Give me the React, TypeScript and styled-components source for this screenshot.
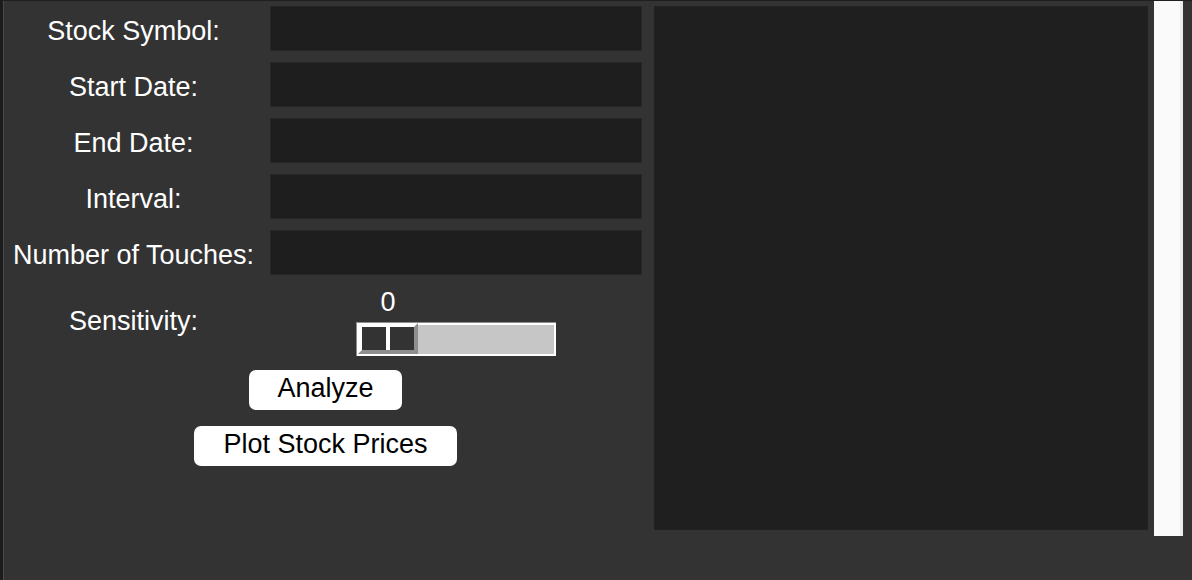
import React from "react";
import styled, { createGlobalStyle } from "styled-components";

const Global = createGlobalStyle`
  html, body { margin: 0; padding: 0; background: #333333; }
  body { font-family: "Liberation Sans", Arial, sans-serif; }
`;

const Window = styled.div`
  width: 1192px;
  height: 580px;
  box-sizing: border-box;
  background: #333333;
  border-top: 1px solid #1f1f1f;
  border-left: 3px solid #1c1c1c;
  box-shadow: inset 1px 0 0 #4a4a4a;
  display: flex;
  align-items: flex-start;
  overflow: hidden;
`;

const FormPanel = styled.div`
  width: 651px;
  padding: 5px 0 0 1px;
  box-sizing: border-box;
  display: flex;
  flex-direction: column;
`;

const FormGrid = styled.div`
  display: grid;
  grid-template-columns: 259px 372px;
  grid-template-rows: repeat(5, 45px) 70px;
  column-gap: 7px;
  row-gap: 11px;
`;

const Label = styled.div<{ $nudge?: number }>`
  display: flex;
  align-items: center;
  justify-content: center;
  padding-top: ${(p) => p.$nudge ?? 0}px;
  box-sizing: border-box;
  color: #ffffff;
  font-size: 27px;
  line-height: 31px;
  white-space: nowrap;
`;

const Entry = styled.div`
  background: #1e1e1e;
  box-shadow: inset 0 0 0 1px #262626;
`;

const SliderCell = styled.div`
  display: flex;
  flex-direction: column;
  align-items: center;
`;

const SliderValue = styled.div`
  color: #ffffff;
  font-size: 27px;
  line-height: 31px;
  margin-top: 1px;
  margin-bottom: 4px;
  margin-left: -136px;
`;

const Trough = styled.div`
  position: relative;
  width: 200px;
  height: 34px;
  box-sizing: border-box;
  background: #c6c6c6;
  border-top: 1px solid #8e8e8e;
  border-left: 1px solid #8e8e8e;
  box-shadow: inset 2px 2px 0 #ffffff, inset -2px -2px 0 #ffffff;
`;

const Thumb = styled.div`
  position: absolute;
  left: 1px;
  top: 0;
  width: 60px;
  height: 31px;
  box-sizing: border-box;
  display: flex;
  gap: 4px;
  background: #ffffff;
  border-top: 4px solid #ffffff;
  border-left: 4px solid #ffffff;
  border-right: 4px solid #8e8e8e;
  border-bottom: 4px solid #8e8e8e;
`;

const ThumbHalf = styled.div`
  flex: 1;
  background: #333333;
`;

const ButtonStack = styled.div`
  display: flex;
  flex-direction: column;
  align-items: center;
  gap: 16px;
  margin-top: 14px;
  padding-right: 7px;
`;

const Button = styled.button<{ $pad?: number }>`
  height: 40px;
  padding: 0 ${(p) => p.$pad ?? 29}px 3px;
  box-sizing: border-box;
  border: none;
  border-radius: 7px;
  background: #ffffff;
  color: #000000;
  font-family: "Liberation Sans", Arial, sans-serif;
  font-size: 27px;
  line-height: 31px;
  cursor: pointer;
`;

const Canvas = styled.div`
  width: 494px;
  height: 524px;
  margin-top: 5px;
  background: #1f1f1f;
  box-shadow: inset 0 0 0 1px #222222;
`;

const SideBar = styled.div`
  width: 29px;
  height: 535px;
  margin-left: 6px;
  background: #fafafa;
  box-shadow: inset -3px 0 0 #ececec;
`;

const fields = [
  "Stock Symbol:",
  "Start Date:",
  "End Date:",
  "Interval:",
  "Number of Touches:",
];

export default function App() {
  return (
    <>
      <Global />
      <Window>
        <FormPanel>
          <FormGrid>
            {fields.map((f) => (
              <React.Fragment key={f}>
                <Label $nudge={5}>{f}</Label>
                <Entry />
              </React.Fragment>
            ))}
            <Label>Sensitivity:</Label>
            <SliderCell>
              <SliderValue>0</SliderValue>
              <Trough>
                <Thumb>
                  <ThumbHalf />
                  <ThumbHalf />
                </Thumb>
              </Trough>
            </SliderCell>
          </FormGrid>
          <ButtonStack>
            <Button $pad={28}>Analyze</Button>
            <Button>Plot Stock Prices</Button>
          </ButtonStack>
        </FormPanel>
        <Canvas />
        <SideBar />
      </Window>
    </>
  );
}
